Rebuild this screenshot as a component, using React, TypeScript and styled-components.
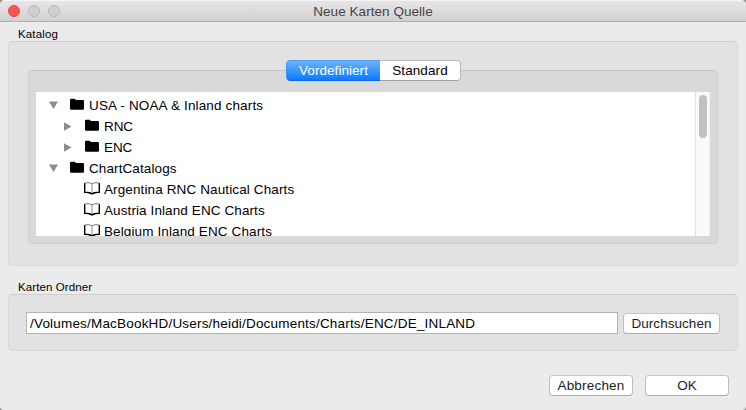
import React from 'react';
import styled, { createGlobalStyle } from 'styled-components';

const GlobalStyle = createGlobalStyle`
  * { box-sizing: border-box; }
  body { margin: 0; background: #8b9199; overflow: hidden; }
`;

const Window = styled.div`
  width: 746px;
  height: 410px;
  display: flex;
  flex-direction: column;
  background: #ebebeb;
  border-radius: 5px 5px 4px 4px;
  overflow: hidden;
  font: 13.5px/16px 'Liberation Sans', Arial, sans-serif;
  color: #000;
`;

const TitleBar = styled.header`
  height: 22px;
  flex: none;
  display: grid;
  grid-template-columns: 1fr auto 1fr;
  align-items: center;
  padding: 0 8px;
  background: linear-gradient(#e9e6e9, #d1d1d1);
  border-bottom: 1px solid #b1b1b1;
  box-shadow: inset 0 1px #f6f5f6;
`;

const Lights = styled.div`
  display: flex;
  gap: 8px;
`;

const Light = styled.span<{ $active?: boolean }>`
  width: 12px;
  height: 12px;
  border-radius: 50%;
  background: ${(p) => (p.$active ? '#fc5753' : '#d0cfd0')};
  border: 1px solid ${(p) => (p.$active ? '#df4744' : '#b9b8b9')};
`;

const Text = styled.span<{ $track?: number }>`
  display: block;
  white-space: pre;
  letter-spacing: ${(p) => p.$track ?? 0.05}px;
`;

const Title = styled(Text)`
  color: #464446;
  padding-top: 2px;
`;

const GroupLabel = styled.div<{ $top: number }>`
  margin: ${(p) => p.$top}px 0 0 18px;
  height: 14px;
  flex: none;
  font-size: 11.5px;
  line-height: 14px;
`;

const Group = styled.section<{ $height: number }>`
  flex: none;
  margin-left: 8px;
  width: 730px;
  height: ${(p) => p.$height}px;
  background: #e2e2e2;
  border: 1px solid #dadada;
  border-top-color: #cfcfcf;
  border-radius: 4px;
`;

const CatalogGroup = styled(Group)`
  padding: 18px 19px 0;
  display: flex;
  flex-direction: column;
  align-items: center;
`;

const Segments = styled.div`
  display: flex;
  z-index: 1;
  width: 175px;
  height: 21px;
  flex: none;
  margin-left: 1px;
  border-radius: 4px;
  overflow: hidden;
`;

const Segment = styled.button<{ $selected?: boolean; $width: number }>`
  width: ${(p) => p.$width}px;
  height: 21px;
  padding: 0;
  display: flex;
  align-items: center;
  justify-content: center;
  font: inherit;
  color: ${(p) => (p.$selected ? '#fff' : '#000')};
  background: ${(p) => (p.$selected ? 'linear-gradient(#6bb3fa, #0a7bff)' : '#fff')};
  border: 1px solid;
  border-color: ${(p) => (p.$selected ? '#4fa0f5 #2b8bfb #0668f0 #3c96fb' : '#bcbcbc #b5b5b5 #a4a4a4 #fff')};
  border-left-width: ${(p) => (p.$selected ? 1 : 0)}px;
  border-right-width: ${(p) => (p.$selected ? 0 : 1)}px;
  border-radius: ${(p) => (p.$selected ? '4px 0 0 4px' : '0 4px 4px 0')};
`;

const TabPane = styled.div`
  width: 690px;
  height: 174px;
  flex: none;
  margin-top: -11px;
  padding: 21px 7px 0;
  background: #d9d9d9;
  border: 1px solid #d0d0d0;
  border-top-color: #c8c8c8;
  border-radius: 4px;
`;

const Tree = styled.div`
  display: flex;
  height: 144px;
  background: #fff;
  overflow: hidden;
`;

const Rows = styled.div`
  flex: 1;
  padding-top: 3px;
`;

const Row = styled.div<{ $indent: number }>`
  display: flex;
  align-items: center;
  height: 21px;
  padding-left: ${(p) => p.$indent}px;
`;

const ArrowSlot = styled.span`
  width: 21px;
  height: 9px;
  display: flex;
`;

const IconSlot = styled.span<{ $shift: number }>`
  width: ${(p) => 19 + p.$shift}px;
  margin-left: ${(p) => -p.$shift}px;
  height: 15px;
  display: flex;
`;

const ScrollTrack = styled.div`
  width: 15px;
  padding: 3px 0 0 3px;
  background: #fafafa;
  border-left: 1px solid #e3e3e3;
  border-right: 1px solid #eee;
`;

const ScrollThumb = styled.div`
  width: 8px;
  height: 43px;
  border-radius: 4px;
  background: #c1c1c1;
`;

const FolderGroup = styled(Group)`
  display: flex;
  align-items: flex-start;
  padding: 17px 17px 0;
  gap: 5px;
`;

const PathInput = styled.div`
  width: 592px;
  flex: none;
  height: 22px;
  padding: 3px;
  background: #fff;
  border: 1px solid #b2b2b2;
`;

const Button = styled.button<{ $width: number }>`
  width: ${(p) => p.$width}px;
  height: 21px;
  padding: 0;
  display: flex;
  align-items: center;
  justify-content: center;
  font: inherit;
  color: #1c1c1c;
  background: #fff;
  border: 1px solid;
  border-color: #c6c6c6 #bdbdbd #a9a9a9;
  border-radius: 4px;
`;

const BrowseWrap = styled.div`
  padding-top: 1px;
`;

const Footer = styled.footer`
  display: flex;
  justify-content: flex-end;
  gap: 12px;
  padding: 24px 17px 0 0;
`;

const DownArrow = () => (
  <svg width="9" height="9" viewBox="0 0 9 9"><path d="M0 .5h9L4.5 8z" fill="#8b8b8b" /></svg>
);
const RightArrow = () => (
  <svg width="9" height="9" viewBox="0 0 9 9"><path d="M0 .3v8.4L7.5 4.5z" fill="#8b8b8b" /></svg>
);
const FolderIcon = () => (
  <svg width="14" height="14" viewBox="0 -.7 14 14">
    <path d="M0 1.2Q0 0 1.2 0h3.1q.9 0 1.2.8l.2.5h7.2Q14 1.3 14 2.4v7.4Q14 11 12.8 11H1.2Q0 11 0 9.8z" fill="#000" />
  </svg>
);
const BookIcon = () => (
  <svg width="16" height="14" viewBox="0 0 16 14">
    <path d="M1.6 .8Q5.8 .2 8 1.8 10.2 .2 14.4 .8" fill="none" stroke="#6a6a6a" strokeWidth=".9" />
    <path d="M8 1.8v9" stroke="#8a8a8a" />
    <path d="M0 1.2 1.4.6V9.8Q6 9.5 8 11.1 10 9.5 14.6 9.8V.6L16 1.2v9.9q-4.6-.2-6.2.8Q8 13 6.2 11.9 4.6 10.9 0 11.1z" fill="#000" />
  </svg>
);

type Item = { label: string; level: number; kind: 'open' | 'closed' | 'leaf'; track: number };

const items: Item[] = [
  { label: 'USA - NOAA & Inland charts', level: 0, kind: 'open', track: 0.15 },
  { label: 'RNC', level: 1, kind: 'closed', track: -0.1 },
  { label: 'ENC', level: 1, kind: 'closed', track: -0.1 },
  { label: 'ChartCatalogs', level: 0, kind: 'open', track: 0.1 },
  { label: 'Argentina RNC Nautical Charts', level: 1, kind: 'leaf', track: 0.12 },
  { label: 'Austria Inland ENC Charts', level: 1, kind: 'leaf', track: 0.1 },
  { label: 'Belgium Inland ENC Charts', level: 1, kind: 'leaf', track: 0.12 },
];

export default function App() {
  return (
    <>
      <GlobalStyle />
      <Window>
        <TitleBar>
          <Lights>
            <Light $active />
            <Light />
            <Light />
          </Lights>
          <Title>Neue Karten Quelle</Title>
        </TitleBar>
        <GroupLabel $top={5}><Text $track={0.15}>Katalog</Text></GroupLabel>
        <CatalogGroup $height={225}>
          <Segments>
            <Segment $selected $width={94}><Text>Vordefiniert</Text></Segment>
            <Segment $width={81}><Text $track={0.1}>Standard</Text></Segment>
          </Segments>
          <TabPane>
            <Tree>
              <Rows>
                {items.map((item) => (
                  <Row key={item.label} $indent={item.level ? 28 : 13}>
                    <ArrowSlot>
                      {item.kind === 'open' && <DownArrow />}
                      {item.kind === 'closed' && <RightArrow />}
                    </ArrowSlot>
                    <IconSlot $shift={item.kind === 'leaf' ? 1 : 0}>
                      {item.kind === 'leaf' ? <BookIcon /> : <FolderIcon />}
                    </IconSlot>
                    <Text $track={item.track}>{item.label}</Text>
                  </Row>
                ))}
              </Rows>
              <ScrollTrack><ScrollThumb /></ScrollTrack>
            </Tree>
          </TabPane>
        </CatalogGroup>
        <GroupLabel $top={14}><Text $track={0.1}>Karten Ordner</Text></GroupLabel>
        <FolderGroup $height={57}>
          <PathInput><Text $track={0.19}>/Volumes/MacBookHD/Users/heidi/Documents/Charts/ENC/DE_INLAND</Text></PathInput>
          <BrowseWrap><Button $width={97}><Text>Durchsuchen</Text></Button></BrowseWrap>
        </FolderGroup>
        <Footer>
          <Button $width={84}><Text $track={0.2}>Abbrechen</Text></Button>
          <Button $width={84}><Text>OK</Text></Button>
        </Footer>
      </Window>
    </>
  );
}
